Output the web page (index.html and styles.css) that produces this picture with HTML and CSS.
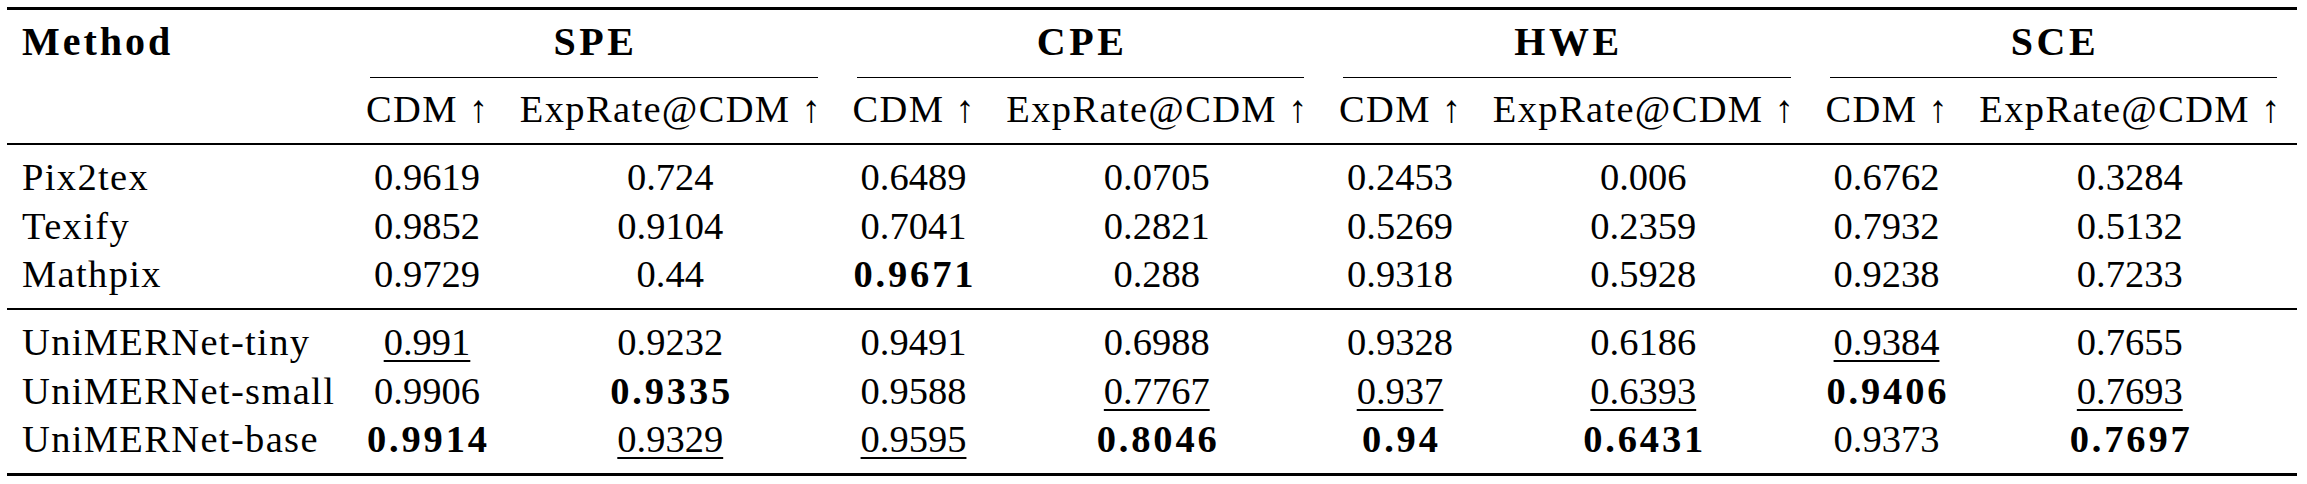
FILE: index.html
```html
<!DOCTYPE html>
<html lang="en">
<head>
<meta charset="utf-8">
<title>CDM results</title>
<link rel="stylesheet" href="styles.css">
</head>
<body>
<div class="page">
<table class="results">
  <colgroup>
    <col class="c-method">
    <col class="c-cdm"><col class="c-exp">
    <col class="c-cdm"><col class="c-exp">
    <col class="c-cdm"><col class="c-exp">
    <col class="c-cdm"><col class="c-exp">
  </colgroup>
  <thead>
    <tr class="head">
      <th class="method" rowspan="2">Method</th>
      <th class="group" colspan="2"><div class="group-label">SPE</div></th>
      <th class="group" colspan="2"><div class="group-label">CPE</div></th>
      <th class="group" colspan="2"><div class="group-label">HWE</div></th>
      <th class="group" colspan="2"><div class="group-label">SCE</div></th>
    </tr>
    <tr class="sub">
      <th>CDM <span class="arr">↑</span></th><th>ExpRate@CDM <span class="arr">↑</span></th>
      <th>CDM <span class="arr">↑</span></th><th>ExpRate@CDM <span class="arr">↑</span></th>
      <th>CDM <span class="arr">↑</span></th><th>ExpRate@CDM <span class="arr">↑</span></th>
      <th>CDM <span class="arr">↑</span></th><th>ExpRate@CDM <span class="arr">↑</span></th>
    </tr>
  </thead>
  <tbody class="grp grp-baseline">
    <tr class="first">
      <td class="name">Pix2tex</td>
      <td>0.9619</td><td>0.724</td><td>0.6489</td><td>0.0705</td><td>0.2453</td><td>0.006</td><td>0.6762</td><td>0.3284</td>
    </tr>
    <tr>
      <td class="name">Texify</td>
      <td>0.9852</td><td>0.9104</td><td>0.7041</td><td>0.2821</td><td>0.5269</td><td>0.2359</td><td>0.7932</td><td>0.5132</td>
    </tr>
    <tr class="last">
      <td class="name">Mathpix</td>
      <td>0.9729</td><td>0.44</td><td><span class="b">0.9671</span></td><td>0.288</td><td>0.9318</td><td>0.5928</td><td>0.9238</td><td>0.7233</td>
    </tr>
  </tbody>
  <tbody class="grp grp-ours">
    <tr class="first">
      <td class="name">UniMERNet-tiny</td>
      <td><span class="u">0.991</span></td><td>0.9232</td><td>0.9491</td><td>0.6988</td><td>0.9328</td><td>0.6186</td><td><span class="u">0.9384</span></td><td>0.7655</td>
    </tr>
    <tr>
      <td class="name">UniMERNet-small</td>
      <td>0.9906</td><td><span class="b">0.9335</span></td><td>0.9588</td><td><span class="u">0.7767</span></td><td><span class="u">0.937</span></td><td><span class="u">0.6393</span></td><td><span class="b">0.9406</span></td><td><span class="u">0.7693</span></td>
    </tr>
    <tr class="last">
      <td class="name">UniMERNet-base</td>
      <td><span class="b">0.9914</span></td><td><span class="u">0.9329</span></td><td><span class="u">0.9595</span></td><td><span class="b">0.8046</span></td><td><span class="b">0.94</span></td><td><span class="b">0.6431</span></td><td>0.9373</td><td><span class="b">0.7697</span></td>
    </tr>
  </tbody>
</table>
</div>
</body>
</html>
```

FILE: styles.css
```css
html, body {
  margin: 0;
  padding: 0;
  background: #ffffff;
}

body {
  font-family: "Liberation Serif", serif;
  color: #000000;
}

.page {
  padding: 7px 0 0 7px;
}

.results {
  border-collapse: separate;
  border-spacing: 0;
  table-layout: fixed;
  width: 2290px;
  font-size: 38.5px;
  font-family: "Liberation Serif", serif;
}

.c-method { width: 344px; }
.c-cdm { width: 152px; }
.c-exp { width: 334.5px; }

.results th,
.results td {
  padding: 0;
  text-align: center;
  white-space: nowrap;
}

/* header row */
.head th {
  border-top: 3px solid #000;
  vertical-align: top;
}

.method {
  text-align: left !important;
  font-size: 40px;
  font-weight: bold;
  letter-spacing: 0.075em;
  line-height: 48px;
  padding: 7.5px 0 0 15px !important;
  border-bottom: 2px solid #000;
}

.group-label {
  margin: 0 20px 0 19px;
  padding: 7.5px 0 11.5px;
  line-height: 48px;
  font-size: 40px;
  font-weight: bold;
  letter-spacing: 0.09em;
  text-indent: 0.09em;
  border-bottom: 1px solid #000;
}

/* sub header row */
.sub th {
  font-weight: normal;
  line-height: 48px;
  letter-spacing: 0.035em;
  padding: 7px 0 10px;
  border-bottom: 2px solid #000;
}

.arr {
  letter-spacing: 0;
}

/* body rows */
.grp td {
  line-height: 48.5px;
}

.grp .first td {
  padding-top: 8px;
}

.grp .last td {
  padding-bottom: 9.5px;
}

.grp-baseline .last td {
  border-bottom: 2px solid #000;
}

.grp-ours .last td {
  border-bottom: 3px solid #000;
}

.results td.name {
  text-align: left;
  padding-left: 15px;
  letter-spacing: 0.035em;
}

.b {
  font-weight: bold;
  letter-spacing: 0.074em;
  margin-right: -0.074em;
}

.u {
  text-decoration: underline;
  text-decoration-thickness: 1.5px;
  text-underline-offset: 5px;
}
```
